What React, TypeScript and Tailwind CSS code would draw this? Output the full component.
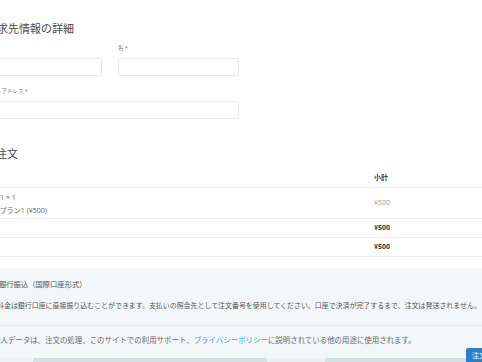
import React from "react";

function Field({ label }: { label: string }) {
  return (
    <div className="flex flex-col">
      <label className="text-[5.5px] leading-[8px] mb-[6px] text-[#7a7a7a] whitespace-nowrap">
        {label} <span className="text-[#e2401c]">*</span>
      </label>
      <input
        className="h-[18px] w-full border border-[#e8e8e8] rounded-[2px] bg-white outline-none"
        type="text"
      />
    </div>
  );
}

export default function App() {
  return (
    <div className="w-[482px] h-[362px] overflow-hidden bg-white font-['Open_Sans','Noto_Sans_CJK_JP',sans-serif] text-[#666]">
      <div className="pt-[22px]">
        <h3 className="-ml-[14px] text-[11px] leading-[13px] text-[#4a4a4a] font-normal whitespace-nowrap">
          請求先情報の詳細
        </h3>
        <div className="-ml-[15px] mt-[9px] w-[254px] grid grid-cols-[117px_121px] gap-x-[16px]">
          <Field label="姓" />
          <Field label="名" />
          <div className="col-span-2 mt-[11px]">
            <Field label="メールアドレス" />
          </div>
        </div>

        <h3 className="-ml-[15px] mt-[28px] text-[11px] leading-[13px] text-[#4a4a4a] font-normal whitespace-nowrap">
          ご注文
        </h3>

        <div className="-ml-[32px] w-[560px] mt-[10px] text-[7px]">
          <div className="grid grid-cols-[406px_1fr] h-[18px] items-center border-b border-[#ededed] font-bold text-[#333]">
            <div className="pl-[11px]">商品</div>
            <div>小計</div>
          </div>
          <div className="grid grid-cols-[406px_1fr] border-b border-[#ededed]">
            <div className="pl-[11px] pt-[3px] pb-[1px]">
              <div className="leading-[13px] whitespace-nowrap">
                プラン1<strong className="ml-[2px] font-normal">× 1</strong>
              </div>
              <div className="-ml-[2px] leading-[13px] flex whitespace-nowrap">
                <span>プラン:</span>
                <span>プラン1 (¥500)</span>
              </div>
            </div>
            <div className="self-center text-[#9a9a9a]">¥500</div>
          </div>
          <div className="grid grid-cols-[406px_1fr] h-[19px] items-center border-b border-[#ededed] text-[#333]">
            <div className="pl-[11px] font-bold">小計</div>
            <div className="font-bold">¥500</div>
          </div>
          <div className="grid grid-cols-[406px_1fr] h-[19px] items-center border-b border-[#ededed] text-[#333]">
            <div className="pl-[11px] font-bold">合計</div>
            <div className="font-bold">¥500</div>
          </div>
        </div>

        <div className="-ml-[32px] w-[560px] mt-[11px] h-[90px] bg-[#f4f7f9]">
          <div className="pt-[11px] pb-[14px] border-b border-[#e5ebef]">
            <div className="pl-[31px] text-[7.3px] leading-[10px] text-[#555] whitespace-nowrap">
              銀行振込（国際口座形式）
            </div>
            <div className="pl-[29px] mt-[12px] text-[6.95px] leading-[10px] text-[#555] whitespace-nowrap">
              料金は銀行口座に直接振り込むことができます。支払いの照会先として注文番号を使用してください。口座で決済が完了するまで、注文は発送されません。
            </div>
          </div>
          <div className="pt-[9px]">
            <p className="pl-[25px] text-[7.45px] leading-[10px] text-[#666] whitespace-nowrap">
              個人データは、注文の処理、このサイトでの利用サポート、
              <a className="text-[#2ea3f2]">プライバシーポリシー</a>
              に説明されている他の用途に使用されます。
            </p>
            <div className="mt-[3px] flex">
              <button className="relative z-10 ml-[498px] h-[16px] px-[6px] bg-[#2a7fc6] text-white text-[7px] leading-[16px] rounded-[2px] whitespace-nowrap">
                注文する
              </button>
            </div>
          </div>
        </div>

        <div className="flex h-[4px] w-[482px]">
          <div className="w-[33px] bg-[#eef3f5]" />
          <div className="w-[234px] bg-[#d3e0e5]" />
          <div className="w-[58px] bg-[#e9eff2]" />
          <div className="flex-1 bg-[#d3e0e5]" />
        </div>
      </div>
    </div>
  );
}
